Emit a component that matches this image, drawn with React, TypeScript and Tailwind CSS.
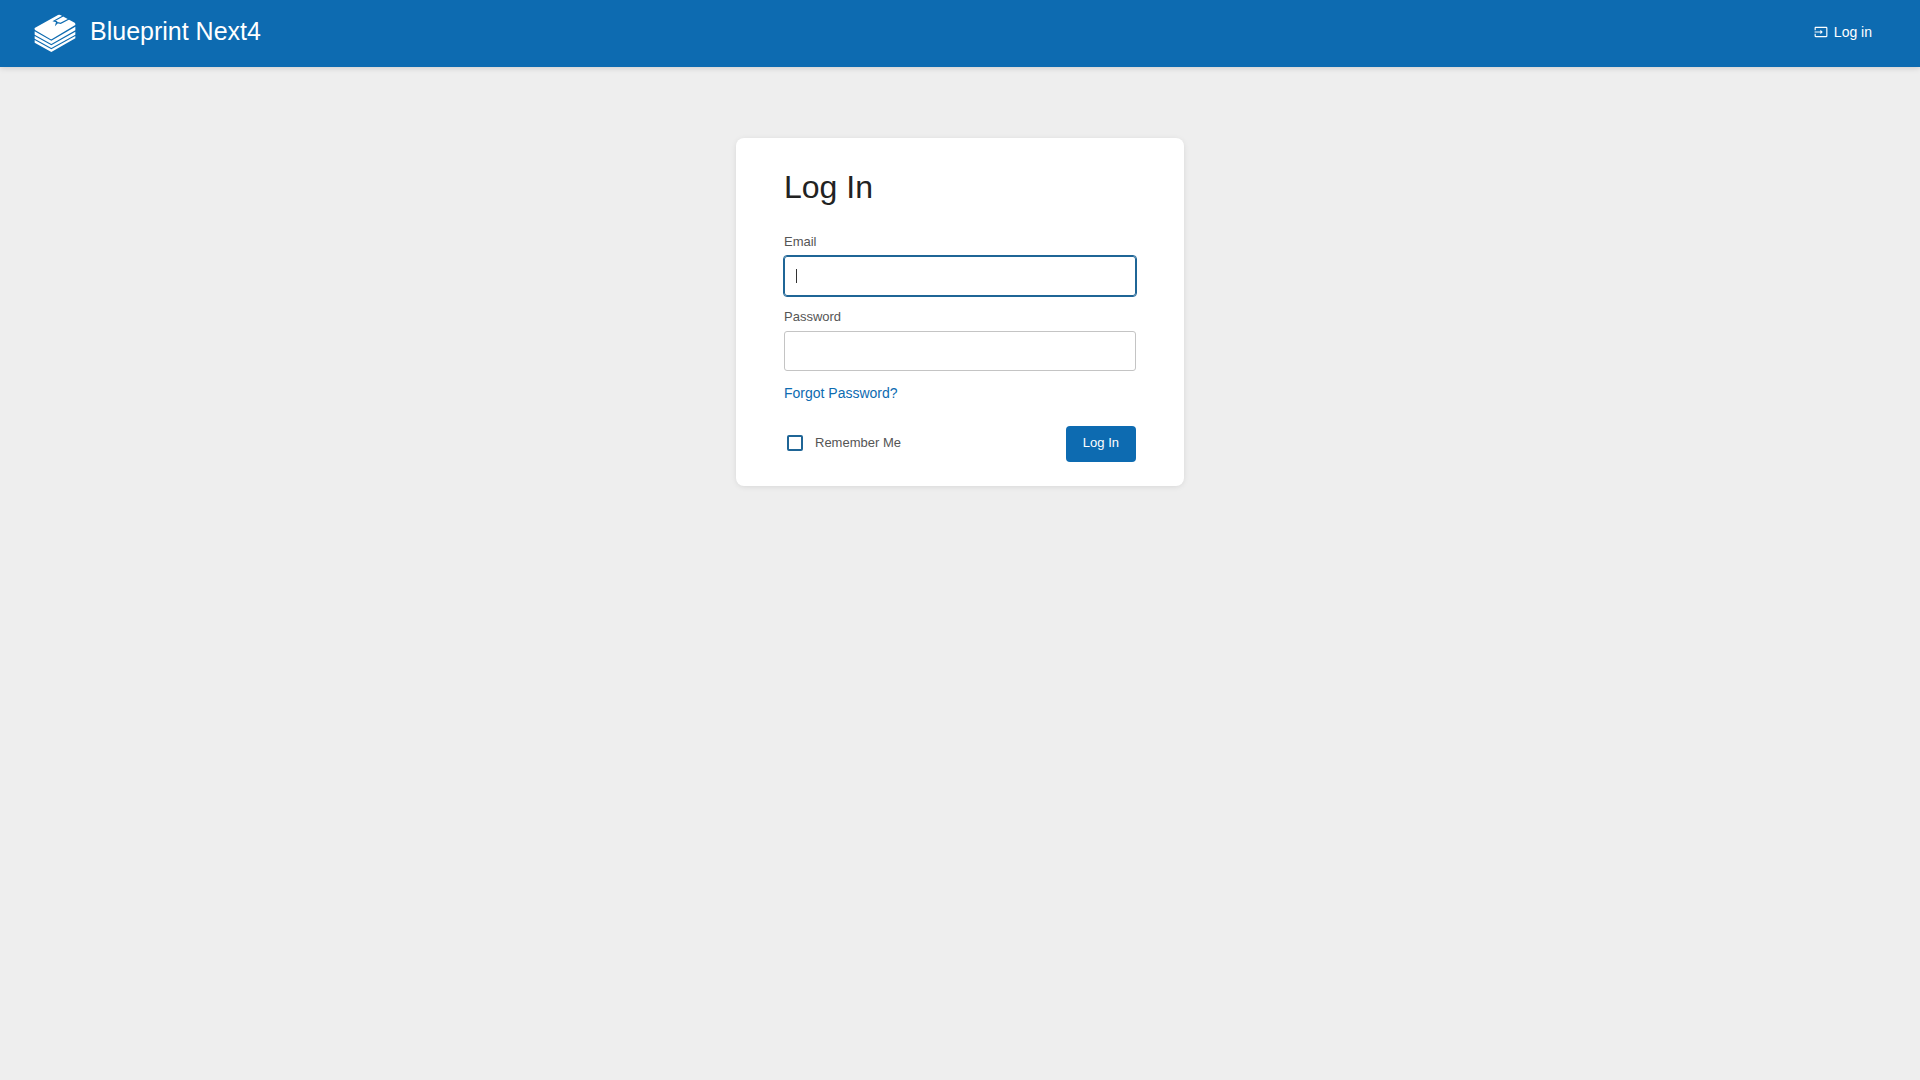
import React, { FormEventHandler, InputHTMLAttributes, useState } from 'react';
import { MdInput } from 'react-icons/md';

interface FieldProps extends InputHTMLAttributes<HTMLInputElement> {
  label: string;
  active?: boolean;
}

function Logo() {
  return (
    <svg className="h-[38px] w-[42px]" viewBox="0 0 126 114" fill="#fff" aria-hidden="true">
      {/* cover */}
      <path d="M2 42 L72 3 Q75 1 79 3 L122 26 Q125 28 124 33 L54 75 Q52 77 49 75 L3 48 Q1 45 2 42 Z" />
      {/* bookmark ribbon */}
      <path
        d="M87 6 L60 21 L68 23 L66 31 L71 26 L80 28 L105 15"
        fill="none"
        stroke="#0d6bb1"
        strokeWidth="3.5"
      />
      {/* pages */}
      <path d="M2 52 L52 80 L124 38 V49 L52 90 L2 62 Z" />
      <path d="M2 66 L52 94 L124 53 V62 L52 102 L2 74 Z" />
      <path d="M2 78 L52 106 L124 66 V73 L52 114 L2 86 Z" />
    </svg>
  );
}

function Field({ label, id, active, ...props }: FieldProps) {
  return (
    <div>
      <label htmlFor={id} className="block pb-1 text-[13px] leading-5 text-[#555]">
        {label}
      </label>
      <div className="relative">
        <input
          id={id}
          className={
            active
              ? 'block h-10 w-full rounded-[3px] border border-[#1f6596] bg-white px-3 text-sm text-[#444] outline-1 outline-[#1f6596]'
              : 'block h-10 w-full rounded-[3px] border border-[#c4c4c4] bg-white px-3 text-sm text-[#444] outline-none'
          }
          {...props}
        />
        {active && <span className="absolute left-3 top-[13px] h-3.5 w-px bg-[#333]" />}
      </div>
    </div>
  );
}

export default function App() {
  const [remember, setRemember] = useState(false);

  const submit: FormEventHandler = (e) => {
    e.preventDefault();
  };

  return (
    <div className="min-h-screen bg-[#eee] font-['Liberation_Sans',Arial,sans-serif] text-sm text-[#444]">
      <header className="flex h-[67px] items-center justify-between bg-[#0d6bb1] pr-12 pb-0.5 pl-[34px] text-white shadow-[0_1px_6px_rgba(0,0,0,0.15)]">
        <a href="#" className="flex items-center gap-3.5">
          <Logo />
          <span className="pb-1 text-[25px] leading-8">Blueprint Next4</span>
        </a>
        <a href="#login" className="flex items-center gap-1.5 pb-0.5 leading-5">
          <MdInput size={14} />
          Log in
        </a>
      </header>

      <main className="mx-auto mt-[71px] w-full max-w-[448px] rounded-lg bg-white px-12 pt-[29px] pb-6 shadow-[0_1px_6px_-1px_rgba(0,0,0,0.12)]">
        <h1 className="text-[32px] leading-10 text-[#222]">Log In</h1>

        <form onSubmit={submit} className="pt-[25px]">
          <div className="space-y-[11px]">
            <Field id="email" label="Email" type="email" name="email" active />
            <Field id="password" label="Password" type="password" name="password" />
          </div>

          <a href="#reset" className="mt-3 inline-block leading-5 text-[#0d6bb1]">
            Forgot Password?
          </a>

          <div className="mt-[23px] flex items-center justify-between">
            <label className="flex items-center gap-3 pb-0.5 pl-[3px] text-[13px] leading-5 text-[#555]">
              <input
                type="checkbox"
                name="remember"
                checked={remember}
                onChange={(e) => setRemember(e.target.checked)}
                className="size-4 appearance-none rounded-xs border-2 border-[#1f6596] bg-white checked:bg-[#1f6596]"
              />
              Remember Me
            </label>
            <button type="submit" className="h-9 rounded-sm bg-[#0d6bb1] px-[17px] pb-0.5 text-[13px] leading-5 text-white">
              Log In
            </button>
          </div>
        </form>
      </main>
    </div>
  );
}
